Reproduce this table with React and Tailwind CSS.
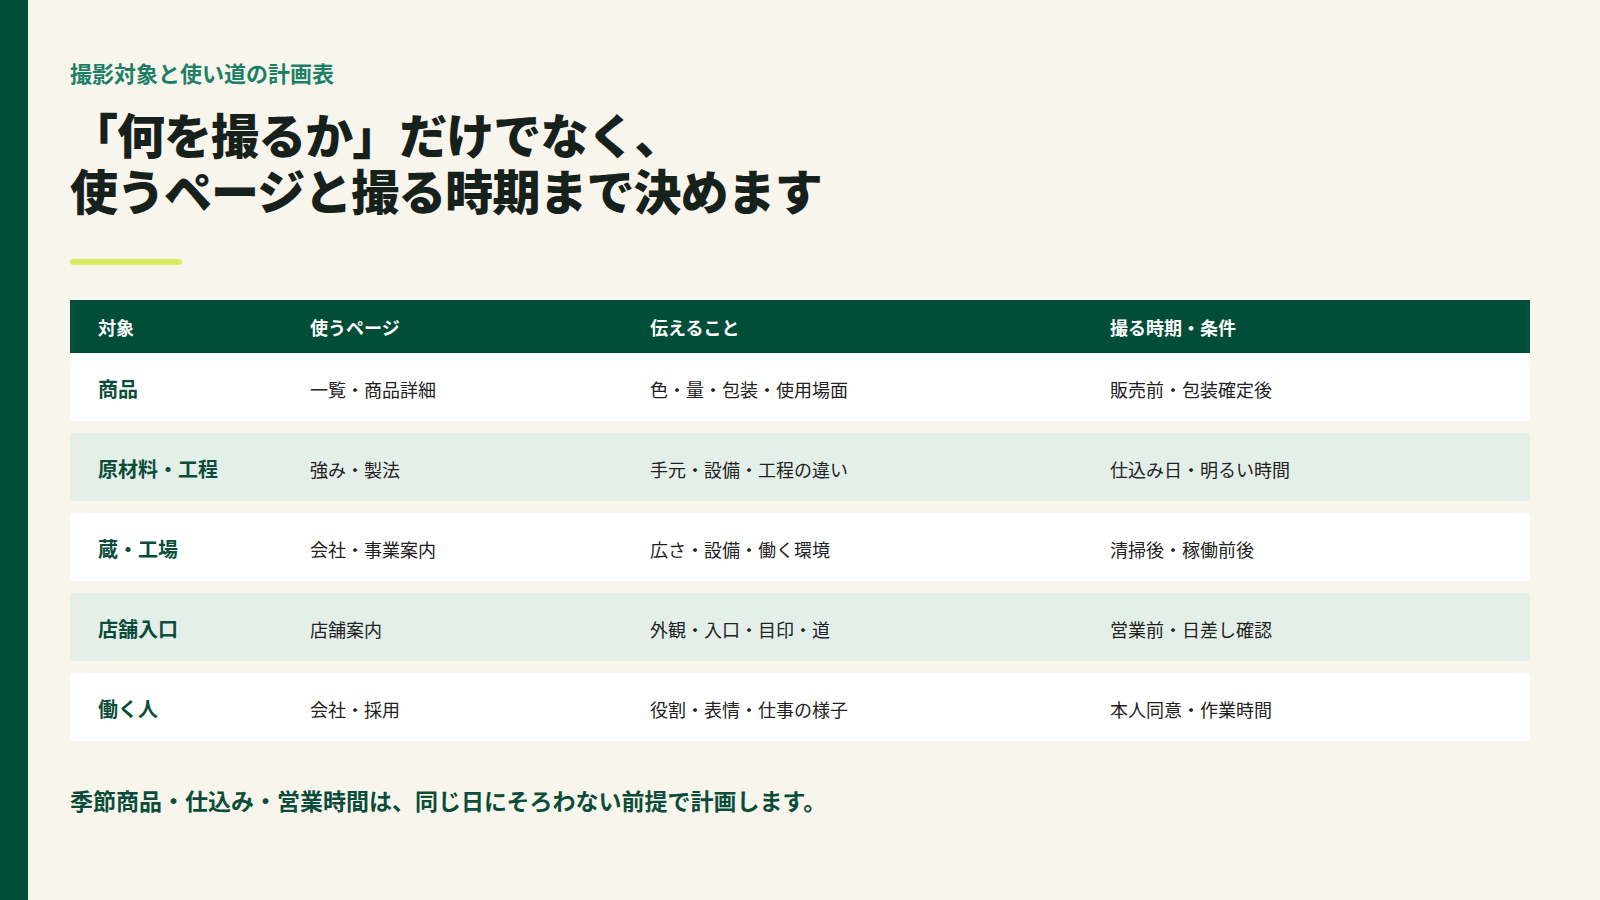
const ROWS = [
  { subject: "商品",         page: "一覧・商品詳細",   point: "色・量・包装・使用場面",     timing: "販売前・包装確定後" },
  { subject: "原材料・工程", page: "強み・製法",       point: "手元・設備・工程の違い",     timing: "仕込み日・明るい時間" },
  { subject: "蔵・工場",     page: "会社・事業案内",   point: "広さ・設備・働く環境",       timing: "清掃後・稼働前後" },
  { subject: "店舗入口",     page: "店舗案内",         point: "外観・入口・目印・道",       timing: "営業前・日差し確認" },
  { subject: "働く人",       page: "会社・採用",       point: "役割・表情・仕事の様子",     timing: "本人同意・作業時間" },
];

const HEADERS = ["対象", "使うページ", "伝えること", "撮る時期・条件"];

const GRID = "grid grid-cols-[212px_340px_460px_1fr] items-center";

export default function App() {
  return (
    <div
      className="flex w-[1600px] h-[900px] bg-[#f8f6ec] overflow-hidden"
      style={{ fontFamily: '"Noto Sans CJK JP", "Noto Sans", sans-serif' }}
    >
      {/* 左の帯 */}
      <div className="w-[28px] shrink-0 bg-[#004d38]" />

      <div className="flex-1 flex flex-col pl-[42px] pr-[70px] pt-[56px]">
        <p className="text-[22px] leading-[33px] font-bold text-[#1d7f66]">
          撮影対象と使い道の計画表
        </p>

        <h1 className="mt-[16px] text-[48px] leading-[56px] font-black tracking-[-0.02em] text-[#17211c]">
          「何を撮るか」だけでなく、
          <br />
          使うページと撮る時期まで決めます
        </h1>

        <div className="mt-[42px] w-[112px] h-[6px] rounded-full bg-[#d7ec5f]" />

        {/* 表 */}
        <div className="mt-[35px] flex flex-col">
          <div className={`${GRID} h-[53px] pt-[2px] bg-[#004d38]`}>
            {HEADERS.map((h) => (
              <div key={h} className="pl-7 text-[18px] font-bold text-white">
                {h}
              </div>
            ))}
          </div>

          {ROWS.map((r, i) => (
            <div
              key={r.subject}
              className={`${GRID} h-[68px] pt-[4px] rounded-[2px] ${i === 0 ? "" : "mt-3"} ${
                i % 2 === 0 ? "bg-white" : "bg-[#e4efea]"
              }`}
            >
              <div className="pl-7 text-[20px] font-bold text-[#0b4d3a]">{r.subject}</div>
              <div className="pl-7 text-[18px] text-[#222]">{r.page}</div>
              <div className="pl-7 text-[18px] text-[#222]">{r.point}</div>
              <div className="pl-7 text-[18px] text-[#222]">{r.timing}</div>
            </div>
          ))}
        </div>

        <p className="mt-[42px] text-[23px] leading-[34px] font-bold text-[#0b4d3a]">
          季節商品・仕込み・営業時間は、同じ日にそろわない前提で計画します。
        </p>
      </div>
    </div>
  );
}
